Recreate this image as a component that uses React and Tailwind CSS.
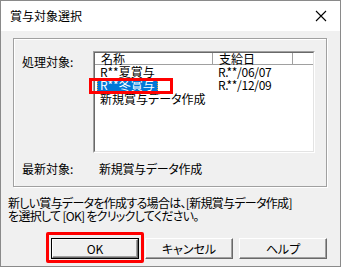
import React from 'react';

const font = { fontFamily: '"Noto Sans CJK JP", "Liberation Sans", sans-serif' };

function Btn({ children, isDefault }) {
  return (
    <div className={`h-[21px] w-[88px] ${isDefault ? 'border border-black' : ''}`}>
      <div className="flex h-full w-full items-center justify-center border border-t-white border-l-white border-r-[#696969] border-b-[#696969] bg-[#f0f0f0] text-[12px] leading-none shadow-[inset_-1px_-1px_0_#a0a0a0]">
        {children}
      </div>
    </div>
  );
}

export default function App() {
  const rows = [
    { name: 'R**夏賞与', date: 'R.**/06/07' },
    { name: 'R**冬賞与', date: 'R.**/12/09', selected: true },
    { name: '新規賞与データ作成', date: '' },
  ];

  return (
    <div className="relative flex h-[267px] w-[341px] flex-col border border-[#8a8a8a] bg-[#f0f0f0] text-black [font-feature-settings:'palt']" style={font}>
      {/* title bar */}
      <div className="flex h-[30px] items-center justify-between bg-white pl-[9px] pr-[9px]">
        <span className="text-[12px] leading-none">賞与対象選択</span>
        <svg width="12" height="12" viewBox="0 0 12 12" className="mr-[4px]">
          <path d="M1 1 L11 11 M11 1 L1 11" stroke="#000" strokeWidth="1.1" fill="none" />
        </svg>
      </div>

      {/* group box */}
      <div className="ml-[12px] mt-[7px] h-[149px] w-[314px] border border-[#a0a0a0] shadow-[1px_1px_0_#fff,inset_1px_1px_0_#fff]">
        <div className="flex pl-[8px] pt-[12px]">
          <div className="w-[71px] pt-[4px] text-[12px] leading-[13px]">処理対象:</div>
          <div className="h-[102px] w-[222px] border border-t-[#a0a0a0] border-l-[#a0a0a0] border-r-white border-b-white">
            <div className="flex h-full w-full flex-col border border-t-[#696969] border-l-[#696969] border-r-[#e3e3e3] border-b-[#e3e3e3] bg-white">
              <div className="flex h-[12px] text-[12px] leading-[11px]">
                <div className="w-[118px] border-r border-b border-r-[#a0a0a0] border-b-[#a0a0a0] pl-[6px]">名称</div>
                <div className="w-[80px] border-r border-b border-r-[#a0a0a0] border-b-[#a0a0a0] pl-[6px]">支給日</div>
                <div className="flex-1 border-b border-b-[#a0a0a0]"></div>
              </div>
              {rows.map((r) => (
                <div key={r.name} className="flex h-[13.5px] items-center text-[12px] leading-[12px]">
                  <div className="w-[118px] pl-[2px]">
                    {r.selected ? (
                      <span className="inline-block border border-dotted border-[#f5a623] bg-[#0078d7] px-[2px] text-white">{r.name}</span>
                    ) : (
                      <span className="px-[3px]">{r.name}</span>
                    )}
                  </div>
                  <div className="pl-[5px] tracking-[-0.3px]">{r.date}</div>
                </div>
              ))}
            </div>
          </div>
        </div>
        <div className="mt-[9px] flex pl-[8px] text-[12px] leading-[14px]">
          <div className="w-[77px]">最新対象:</div>
          <div className="tracking-[-0.3px]">新規賞与データ作成</div>
        </div>
      </div>

      {/* message */}
      <div className="ml-[7px] mt-[10px] text-[12px] leading-[12.5px] tracking-[-0.7px]">
        <div>新しい賞与データを作成する場合は、[新規賞与データ作成]</div>
        <div>を選択して [OK] をクリックしてください。</div>
      </div>

      {/* buttons */}
      <div className="ml-[50px] mt-[16px] flex gap-[6px]">
        <Btn isDefault>OK</Btn>
        <Btn>キャンセル</Btn>
        <Btn>ヘルプ</Btn>
      </div>

      {/* red annotation boxes */}
      <div className="absolute left-[88px] top-[77px] h-[16px] w-[84px] border-[3px] border-[#ff0000]"></div>
      <div className="absolute left-[45px] top-[231px] h-[31px] w-[98px] rounded-[2px] border-[3px] border-[#ff0000]"></div>
    </div>
  );
}
